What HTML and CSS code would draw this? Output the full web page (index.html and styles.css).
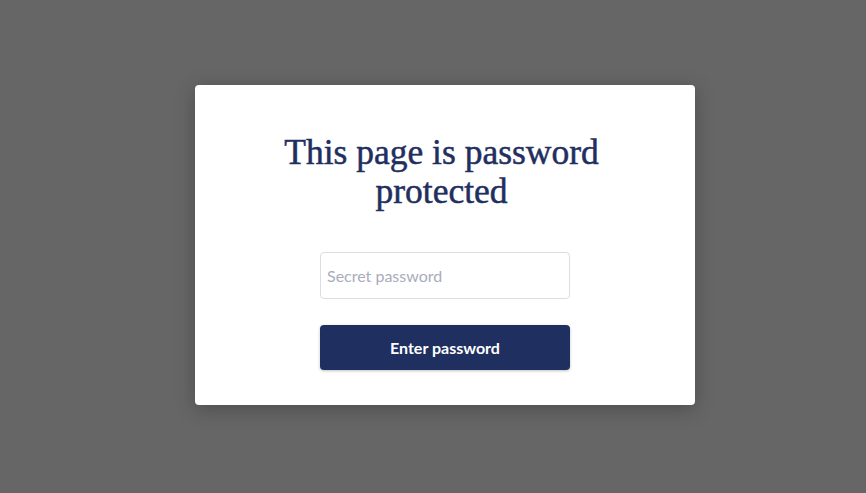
FILE: index.html
```html
<!DOCTYPE html>
<html>
<head>
<meta charset="utf-8">
<link rel="stylesheet" href="styles.css">
</head>
<body>
<div class="overlay">
  <form class="card">
    <h1 class="title">This page is password protected</h1>
    <input class="field" type="password" placeholder="Secret password">
    <button class="btn" type="button">Enter password</button>
  </form>
</div>
</body>
</html>
```

FILE: styles.css
```css
html, body {
  margin: 0;
  padding: 0;
  height: 100%;
}
body {
  background: #666666;
  font-family: Lato, "Liberation Sans", sans-serif;
}
.overlay {
  box-sizing: border-box;
  height: 100%;
  padding: 85px 0 0 24px;
  display: flex;
  align-items: flex-start;
  justify-content: center;
}
.card {
  box-sizing: border-box;
  width: 500px;
  height: 320px;
  background: #ffffff;
  border-radius: 4px;
  box-shadow: 0 4px 20px rgba(0, 0, 0, 0.25);
  padding: 48px 0 0;
  display: flex;
  flex-direction: column;
  align-items: center;
}
.title {
  margin: 0 7px 0 0;
  width: 360px;
  text-align: center;
  font-family: "Liberation Serif", serif;
  font-weight: normal;
  font-size: 35.5px;
  line-height: 39px;
  color: #1f2f5f;
  -webkit-text-stroke: 0.5px #1f2f5f;
}
.field {
  box-sizing: border-box;
  margin-top: 41px;
  width: 250px;
  height: 47px;
  border: 1px solid #dcdde3;
  border-radius: 4px;
  padding: 0 6px;
  font-family: Lato, sans-serif;
  font-size: 16px;
  color: #333;
  outline: none;
}
.field::placeholder {
  color: #a9acbd;
}
.btn {
  box-sizing: border-box;
  margin-top: 26px;
  width: 250px;
  height: 45px;
  border: none;
  border-radius: 4px;
  background: #1f2f5f;
  color: #ffffff;
  font-family: Lato, sans-serif;
  font-weight: bold;
  font-size: 16px;
  box-shadow: 0 1px 3px rgba(0, 0, 0, 0.25);
}
```
